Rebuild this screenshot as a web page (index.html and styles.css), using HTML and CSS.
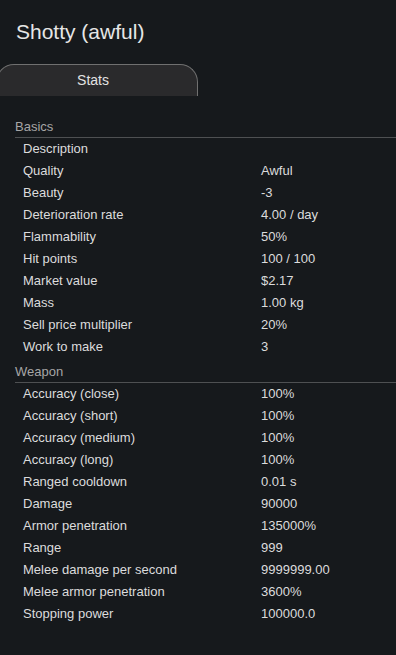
FILE: index.html
```html
<!DOCTYPE html>
<html lang="en">
<head>
    <meta charset="UTF-8">
    <meta name="viewport" content="width=device-width, initial-scale=1.0">
    <title>Shotty (awful)</title>
    <link rel="stylesheet" href="styles.css">
</head>
<body>
    <div class="info-card">
        <h1 class="titulo">Shotty (awful)</h1>

        <div class="abas">
            <div class="aba ativa">Stats</div>
        </div>

        <!-- Basics -->
        <div class="secao">
            <div class="secao-titulo">Basics</div>
            <div class="linha"><span>Description</span><span></span></div>
            <div class="linha"><span>Quality</span><span>Awful</span></div>
            <div class="linha"><span>Beauty</span><span>-3</span></div>
            <div class="linha"><span>Deterioration rate</span><span>4.00 / day</span></div>
            <div class="linha"><span>Flammability</span><span>50%</span></div>
            <div class="linha"><span>Hit points</span><span>100 / 100</span></div>
            <div class="linha"><span>Market value</span><span>$2.17</span></div>
            <div class="linha"><span>Mass</span><span>1.00 kg</span></div>
            <div class="linha"><span>Sell price multiplier</span><span>20%</span></div>
            <div class="linha"><span>Work to make</span><span>3</span></div>
        </div>

        <!-- Weapon -->
        <div class="secao">
            <div class="secao-titulo">Weapon</div>
            <div class="linha"><span>Accuracy (close)</span><span>100%</span></div>
            <div class="linha"><span>Accuracy (short)</span><span>100%</span></div>
            <div class="linha"><span>Accuracy (medium)</span><span>100%</span></div>
            <div class="linha"><span>Accuracy (long)</span><span>100%</span></div>
            <div class="linha"><span>Ranged cooldown</span><span>0.01 s</span></div>
            <div class="linha"><span>Damage</span><span>90000</span></div>
            <div class="linha"><span>Armor penetration</span><span>135000%</span></div>
            <div class="linha"><span>Range</span><span>999</span></div>
            <div class="linha"><span>Melee damage per second</span><span>9999999.00</span></div>
            <div class="linha"><span>Melee armor penetration</span><span>3600%</span></div>
            <div class="linha"><span>Stopping power</span><span>100000.0</span></div>
        </div>
    </div>
</body>
</html>
```

FILE: styles.css
```css
body {
    font-family: 'Liberation Sans', Arial, sans-serif;
    background-color: #16191c;
    color: #dcdcdc;
    margin: 0;
    overflow: hidden;
}

.info-card {
    padding-top: 20px;
}

.titulo {
    font-size: 21px;
    font-weight: normal;
    line-height: 24px;
    margin: 0 0 20px 16px;
    color: #e6e6e6;
}

.abas {
    display: flex;
    margin-bottom: 21px;
}

.aba {
    width: 192px;
    height: 31px;
    margin-left: -4px;
    padding-right: 8px;
    box-sizing: content-box;
    background-color: #2a2a2c;
    border: 1px solid #707070;
    border-bottom: none;
    border-radius: 18px 18px 0 0;
    font-size: 14px;
    line-height: 30px;
    text-align: center;
    color: #e2e2e2;
}

.secao {
    padding-left: 15px;
}

.secao-titulo {
    font-size: 13px;
    line-height: 20px;
    margin-top: 4px;
    color: #a6a6a6;
    border-bottom: 1px solid #4e5052;
}

.linha {
    display: grid;
    grid-template-columns: 238px 1fr;
    padding-left: 8px;
    font-size: 13px;
    line-height: 22px;
    height: 22px;
}
```
